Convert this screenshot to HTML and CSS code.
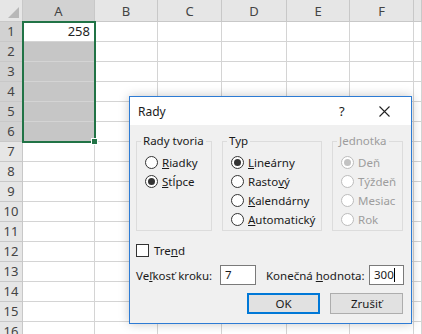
FILE: index.html
```
<!DOCTYPE html>
<html lang="sk">
<head>
    <meta charset="UTF-8">
    <title>Rady</title>
    <link rel="stylesheet" href="styles.css">
</head>
<body>

<div class="sheet">
    <div class="row head">
        <div class="corner"><span class="tri"></span></div>
        <div class="hsel">A</div><div>B</div><div>C</div><div>D</div><div>E</div><div>F</div><div></div>
    </div>
    <div class="row"><div class="rh hsel">1</div><div class="num">258</div><div></div><div></div><div></div><div></div><div></div><div></div></div>
    <div class="row"><div class="rh hsel">2</div><div class="sel"></div><div></div><div></div><div></div><div></div><div></div><div></div></div>
    <div class="row"><div class="rh hsel">3</div><div class="sel"></div><div></div><div></div><div></div><div></div><div></div><div></div></div>
    <div class="row"><div class="rh hsel">4</div><div class="sel"></div><div></div><div></div><div></div><div></div><div></div><div></div></div>
    <div class="row"><div class="rh hsel">5</div><div class="sel"></div><div></div><div></div><div></div><div></div><div></div><div></div></div>
    <div class="row"><div class="rh hsel">6</div><div class="sel"></div><div></div><div></div><div></div><div></div><div></div><div></div></div>
    <div class="row"><div class="rh">7</div><div></div><div></div><div></div><div></div><div></div><div></div><div></div></div>
    <div class="row"><div class="rh">8</div><div></div><div></div><div></div><div></div><div></div><div></div><div></div></div>
    <div class="row"><div class="rh">9</div><div></div><div></div><div></div><div></div><div></div><div></div><div></div></div>
    <div class="row"><div class="rh">10</div><div></div><div></div><div></div><div></div><div></div><div></div><div></div></div>
    <div class="row"><div class="rh">11</div><div></div><div></div><div></div><div></div><div></div><div></div><div></div></div>
    <div class="row"><div class="rh">12</div><div></div><div></div><div></div><div></div><div></div><div></div><div></div></div>
    <div class="row"><div class="rh">13</div><div></div><div></div><div></div><div></div><div></div><div></div><div></div></div>
    <div class="row"><div class="rh">14</div><div></div><div></div><div></div><div></div><div></div><div></div><div></div></div>
    <div class="row"><div class="rh">15</div><div></div><div></div><div></div><div></div><div></div><div></div><div></div></div>
    <div class="row"><div class="rh">16</div><div></div><div></div><div></div><div></div><div></div><div></div><div></div></div>

    <div class="selection"><span class="handle"></span></div>
</div>

<div class="dialog">
    <div class="titlebar">
        <span class="title">Rady</span>
        <span class="help">?</span>
        <span class="close">
            <svg width="11" height="11" viewBox="0 0 11 11"><path d="M0.5 0.5 L10.5 10.5 M10.5 0.5 L0.5 10.5" stroke="#222" stroke-width="1.1" fill="none"/></svg>
        </span>
    </div>
    <div class="body">
        <div class="groups">
            <fieldset class="group g1">
                <legend>Rady tvoria</legend>
                <div class="opt"><span class="radio"></span><u>R</u>iadky</div>
                <div class="opt"><span class="radio on"></span><u>S</u>tĺpce</div>
            </fieldset>
            <fieldset class="group g2">
                <legend>Typ</legend>
                <div class="opt"><span class="radio on"></span><u>L</u>ineárny</div>
                <div class="opt"><span class="radio"></span>Rasto<u>v</u>ý</div>
                <div class="opt"><span class="radio"></span><u>K</u>alendárny</div>
                <div class="opt"><span class="radio"></span><u>A</u>utomatický</div>
            </fieldset>
            <fieldset class="group g3 disabled">
                <legend>Jednotka</legend>
                <div class="opt"><span class="radio on"></span>Deň</div>
                <div class="opt"><span class="radio"></span>Týždeň</div>
                <div class="opt"><span class="radio"></span>Mesiac</div>
                <div class="opt"><span class="radio"></span>Rok</div>
            </fieldset>
        </div>

        <div class="trend"><span class="check"></span>Tre<u>n</u>d</div>

        <div class="fields">
            <span class="lbl1">Ve<u>ľ</u>kosť kroku:</span>
            <span class="input in1">7</span>
            <span class="lbl2">Konečná <u>h</u>odnota:</span>
            <span class="input in2">300<span class="caret"></span></span>
        </div>

        <div class="buttons">
            <span class="btn default">OK</span>
            <span class="btn">Zrušiť</span>
        </div>
    </div>
</div>

</body>
</html>
```

FILE: styles.css
```
body {
    margin: 0;
    width: 422px;
    height: 334px;
    overflow: hidden;
    background: #fff;
    font-family: "Noto Sans", sans-serif;
}

/* spreadsheet */
.sheet {
    position: relative;
    font-size: 13px;
    color: #222;
}
.row {
    display: flex;
    height: 20px;
}
.row > div {
    box-sizing: border-box;
    height: 100%;
    border-right: 1px solid #d4d4d4;
    border-bottom: 1px solid #d4d4d4;
    flex: none;
    width: 64px;
    line-height: 19px;
}
.row > div:nth-child(1) { width: 23px; }
.row > div:nth-child(2) { width: 72px; }
.row > div:nth-child(3) { width: 63px; }
.row > div:nth-child(4) { width: 64px; }
.row > div:nth-child(5) { width: 65px; }
.row > div:nth-child(6) { width: 63px; }
.row > div:nth-child(7) { width: 64px; }
.row > div:nth-child(8) { flex: 1; }

.head {
    height: 22px;
}
.head > div {
    background: #e6e6e6;
    border-color: #c8c8c8;
    text-align: center;
    color: #444;
    line-height: 22px;
}
.corner {
    position: relative;
}
.tri {
    position: absolute;
    right: 3px;
    bottom: 3px;
    width: 0;
    height: 0;
    border-left: 11px solid transparent;
    border-bottom: 11px solid #b8b8b8;
}
.rh {
    background: #e6e6e6;
    border-color: #c8c8c8 !important;
    text-align: center;
    color: #444;
}
.head > .hsel, .rh.hsel {
    background: #d2d2d2;
}
.num {
    text-align: right;
    padding-right: 4px;
}
.row > .sel {
    background: #c6c6c6;
}
.selection {
    position: absolute;
    left: 22px;
    top: 21px;
    width: 74px;
    height: 122px;
    box-sizing: border-box;
    border: 2px solid #217346;
}
.handle {
    position: absolute;
    right: -4px;
    bottom: -4px;
    width: 5px;
    height: 5px;
    background: #217346;
    border: 1px solid #fff;
}

/* dialog */
.dialog {
    position: absolute;
    left: 129px;
    top: 96px;
    width: 281px;
    height: 226px;
    border: 1px solid #2d7bd4;
    background: #f0f0f0;
    box-shadow: 0 0 10px rgba(0, 0, 0, 0.22);
    font-size: 11.5px;
    color: #1a1a1a;
}
.titlebar {
    height: 28px;
    background: #fff;
    display: flex;
    align-items: center;
    padding-left: 8px;
}
.title {
    flex: 1;
    font-size: 12px;
}
.help {
    width: 16px;
    margin-right: 24px;
    font-size: 13px;
}
.close {
    width: 11px;
    margin-right: 21px;
    display: flex;
}
.body {
    padding: 8px 7px 0 6px;
}
.groups {
    display: flex;
    gap: 10px;
}
.group {
    margin: 0;
    padding: 4px 0 0 8px;
    border: 1px solid #dcdcdc;
    height: 92px;
    box-sizing: content-box;
}
.g1 { width: 66px; }
.g2 { width: 90px; }
.g3 { width: 61px; padding-left: 8px; }
legend {
    padding: 0 2px;
    margin-left: -4px;
    line-height: 16px;
}
.opt {
    display: flex;
    align-items: center;
    height: 19px;
    white-space: nowrap;
}
.radio {
    width: 11px;
    height: 11px;
    border: 1px solid #333;
    border-radius: 50%;
    background: #fff;
    margin-right: 4px;
    display: flex;
    align-items: center;
    justify-content: center;
    flex: none;
}
.radio.on::after {
    content: "";
    width: 7px;
    height: 7px;
    border-radius: 50%;
    background: #333;
}
.disabled {
    color: #9d9d9d;
}
.disabled .radio {
    border-color: #bcbcbc;
}
.disabled .radio.on::after {
    background: #c2c2c2;
}

.trend {
    display: flex;
    align-items: center;
    margin-top: 13px;
    height: 13px;
}
.check {
    width: 11px;
    height: 11px;
    border: 1px solid #333;
    background: #fff;
    margin-right: 5px;
}

.fields {
    display: flex;
    align-items: center;
    margin-top: 8px;
    height: 20px;
}
.lbl1 { width: 84px; }
.lbl2 { width: 103px; margin-left: 10px; }
.input {
    box-sizing: border-box;
    height: 20px;
    background: #fff;
    border: 1px solid #7a7a7a;
    padding-left: 4px;
    line-height: 18px;
    display: flex;
    align-items: center;
}
.in1 { width: 36px; }
.in2 { width: 35px; }
.caret {
    width: 1px;
    height: 14px;
    background: #000;
}

.buttons {
    display: flex;
    justify-content: flex-end;
    gap: 10px;
    margin-top: 8px;
    padding-right: 1px;
}
.btn {
    box-sizing: border-box;
    width: 73px;
    height: 21px;
    background: #e1e1e1;
    border: 1px solid #adadad;
    display: flex;
    align-items: center;
    justify-content: center;
}
.btn.default {
    border: 2px solid #0078d7;
}
```
